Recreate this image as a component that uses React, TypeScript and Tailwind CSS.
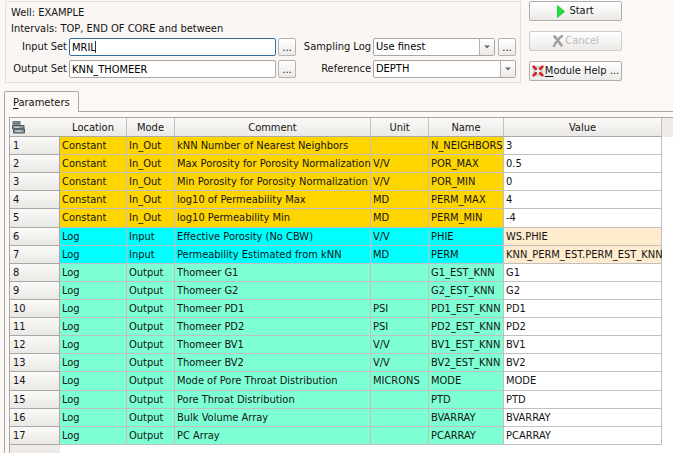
import React from "react";

type Row = [string, string, string, string, string, string];

const rows: Row[] = [
  ["Constant", "In_Out", "kNN Number of Nearest Neighbors", "", "N_NEIGHBORS", "3"],
  ["Constant", "In_Out", "Max Porosity for Porosity Normalization", "V/V", "POR_MAX", "0.5"],
  ["Constant", "In_Out", "Min Porosity for Porosity Normalization", "V/V", "POR_MIN", "0"],
  ["Constant", "In_Out", "log10 of Permeability Max", "MD", "PERM_MAX", "4"],
  ["Constant", "In_Out", "log10 Permeability Min", "MD", "PERM_MIN", "-4"],
  ["Log", "Input", "Effective Porosity (No CBW)", "V/V", "PHIE", "WS.PHIE"],
  ["Log", "Input", "Permeability Estimated from kNN", "MD", "PERM", "KNN_PERM_EST.PERM_EST_KNN"],
  ["Log", "Output", "Thomeer G1", "", "G1_EST_KNN", "G1"],
  ["Log", "Output", "Thomeer G2", "", "G2_EST_KNN", "G2"],
  ["Log", "Output", "Thomeer PD1", "PSI", "PD1_EST_KNN", "PD1"],
  ["Log", "Output", "Thomeer PD2", "PSI", "PD2_EST_KNN", "PD2"],
  ["Log", "Output", "Thomeer BV1", "V/V", "BV1_EST_KNN", "BV1"],
  ["Log", "Output", "Thomeer BV2", "V/V", "BV2_EST_KNN", "BV2"],
  ["Log", "Output", "Mode of Pore Throat Distribution", "MICRONS", "MODE", "MODE"],
  ["Log", "Output", "Pore Throat Distribution", "", "PTD", "PTD"],
  ["Log", "Output", "Bulk Volume Array", "", "BVARRAY", "BVARRAY"],
  ["Log", "Output", "PC Array", "", "PCARRAY", "PCARRAY"],
];

const modeColor: Record<string, string> = {
  In_Out: "bg-[#ffd500]",
  Input: "bg-[#00ffff]",
  Output: "bg-[#7fffd4]",
};

const headings = ["Location", "Mode", "Comment", "Unit", "Name", "Value"];

const fieldStyle =
  "h-[18px] w-full rounded-xs border bg-white px-0.5 text-black outline-none";

function MoreButton({ label }: { label: string }) {
  return (
    <button
      aria-label={label}
      className="flex h-[18px] w-[18px] shrink-0 items-center justify-center rounded-xs border border-[#b5b2af] bg-linear-to-b from-white to-[#eceae8] leading-none"
    >
      ...
    </button>
  );
}

function Combo({ id, value }: { id: string; value: string }) {
  return (
    <div className="relative min-w-0 flex-1">
      <select id={id} defaultValue={value} className={`${fieldStyle} block appearance-none border-[#aaa7a4]`}>
        <option>{value}</option>
      </select>
      <span className="pointer-events-none absolute inset-y-px right-px flex w-[15px] items-center justify-center border-l border-[#b5b2af] bg-linear-to-b from-white to-[#eceae8]">
        <svg width="6" height="4" viewBox="0 0 6 4" aria-hidden="true">
          <path d="M0 0.5h6L3 3.5z" fill="#6b6967" />
        </svg>
      </span>
    </div>
  );
}

const actionStyle =
  "flex h-5 items-center justify-center rounded-xs border bg-linear-to-b from-white to-[#eceae8] whitespace-nowrap";

export default function App() {
  return (
    <div className="flex min-h-screen flex-col overflow-hidden bg-[#fcf8f5] font-['DejaVu_Sans_Condensed','DejaVu_Sans',sans-serif] text-[11px] leading-4 text-[#141414]">
      <div className="flex items-start gap-2 pt-px pr-[51px] pl-[5px]">
        <section className="min-w-0 flex-1 border border-[#e2dfdc] bg-[#faf6f3] pt-[3px] pr-1 pb-1 pl-[5px]">
          <p>Well: EXAMPLE</p>
          <p>Intervals: TOP, END OF CORE and between</p>
          <div className="mt-px grid grid-cols-[56px_minmax(0,227fr)_73px_minmax(0,143fr)] items-center gap-x-0.5 gap-y-1">
            <label htmlFor="input-set" className="text-right">Input Set</label>
            <div className="flex gap-0.5">
              <div className="relative flex-1">
                <input id="input-set" defaultValue="MRIL" className={`${fieldStyle} block border-[#31719e]`} />
                <span className="absolute top-[3px] left-[26px] h-3 w-px bg-[#333]" />
              </div>
              <MoreButton label="Browse input sets" />
            </div>
            <label htmlFor="sampling" className="text-right">Sampling Log</label>
            <div className="flex gap-[3px]">
              <Combo id="sampling" value="Use finest" />
              <MoreButton label="Browse sampling logs" />
            </div>
            <label htmlFor="output-set" className="text-right">Output Set</label>
            <div className="flex gap-0.5">
              <div className="flex-1">
                <input id="output-set" defaultValue="KNN_THOMEER" className={`${fieldStyle} block border-[#aaa7a4]`} />
              </div>
              <MoreButton label="Browse output sets" />
            </div>
            <label htmlFor="reference" className="text-right">Reference</label>
            <div className="flex">
              <Combo id="reference" value="DEPTH" />
            </div>
          </div>
        </section>

        <div className="flex w-[93px] shrink-0 flex-col gap-[10px]">
          <button className={`${actionStyle} gap-1 border-[#b0adaa]`}>
            <svg width="8" height="13" viewBox="0 0 8 13" aria-hidden="true">
              <path d="M0.5 0.5L7.5 6.5L0.5 12.5z" fill="#1fe03a" stroke="#14b82b" strokeWidth="0.7" />
            </svg>
            Start
          </button>
          <button disabled className={`${actionStyle} gap-px border-[#cfccc9] text-[#bebbb8]`}>
            <svg width="12" height="12" viewBox="0 0 12 12" aria-hidden="true">
              <path d="M2.500 1.500C5 4 7 7 9.500 10.500M10 1C6.500 3.500 4 7 2 11" fill="none" stroke="#a3a19f" strokeWidth="2.600" strokeLinecap="round" />
            </svg>
            Cancel
          </button>
          <button className={`${actionStyle} gap-px border-[#b0adaa]`}>
            <svg width="12" height="12" viewBox="0 0 13 13" aria-hidden="true">
              <circle cx="6.500" cy="6.500" r="4.300" fill="none" stroke="#d3d3d5" strokeWidth="3" />
              <path d="M1.800 1.800L4 4M11.200 1.800L9 4M1.800 11.200L4 9M11.200 11.200L9 9" stroke="#c9282d" strokeWidth="3" strokeLinecap="round" />
              <path d="M0.500 4.500L1.500 3.500M8.500 0.500L9.500 1.500M0.500 8.500L1.500 9.500M12.500 8.500L11.500 9.500" stroke="#ee9a9c" strokeWidth="1" />
            </svg>
            <span><u className="underline-offset-2">M</u>odule Help ...</span>
          </button>
        </div>
      </div>

      <div role="tablist" className="mt-2 flex pl-1">
        <button
          role="tab"
          aria-selected="true"
          className="z-10 -mb-px h-[21px] rounded-t-xs border border-b-0 border-[#aaa7a4] bg-[#fcf8f5] px-2 pt-0.5"
        >
          <u className="underline-offset-2">P</u>arameters
        </button>
      </div>

      <div role="tabpanel" className="ml-1 flex flex-1 flex-col border-t border-l border-[#aaa7a4] pt-[5px] pl-1">
        <div className="flex flex-1 flex-col border-t border-l border-[#aaa7a4] bg-white">
          <div className="flex items-stretch bg-[#edeae7]">
            <table className="h-[327px] w-[652px] table-fixed border-separate border-spacing-0 bg-white">
              <colgroup>
                <col className="w-[50px]" />
                <col className="w-[67px]" />
                <col className="w-[48px]" />
                <col className="w-[196px]" />
                <col className="w-[58px]" />
                <col className="w-[75px]" />
                <col />
              </colgroup>
              <thead>
                <tr className="h-[19px] bg-linear-to-b from-[#fcfaf8] to-[#eae8e5]">
                  <th className="border-b border-[#aaa7a4] p-0 pl-0.5">
                    <svg width="13" height="13" viewBox="0 0 13 13" role="img" aria-label="Table options">
                      <path d="M0.500 0.500h8v3h-8z" fill="#8b979e" />
                      <path d="M0.500 0.800h8M0.500 3h8" stroke="#4c575e" />
                      <path d="M0.500 4.500h11.500v3.500h-11.500zM1.500 8h11v4h-11z" fill="#8b979e" stroke="#4c575e" />
                      <path d="M2.500 6.200h5M3.500 10h6" stroke="#dce2e5" />
                    </svg>
                  </th>
                  {headings.map((h) => (
                    <th key={h} className="border-r border-b border-[#c3c0bd] border-b-[#aaa7a4] p-0 pt-0.5 text-center font-normal">
                      {h}
                    </th>
                  ))}
                </tr>
              </thead>
              <tbody>
                {rows.map((row, i) => (
                  <tr key={row[4]} className={modeColor[row[1]]}>
                    <th scope="row" className="border-r border-b border-[#aaa7a4] bg-linear-to-b from-[#fcfaf8] to-[#eae8e5] p-0 pt-px pl-[3px] text-left font-normal">
                      {i + 1}
                    </th>
                    {row.slice(0, 5).map((cell, c) => (
                      <td key={c} className="border-r border-b border-[#c0c0c0] p-0 pt-px pl-0.5 whitespace-nowrap">
                        {cell}
                      </td>
                    ))}
                    <td
                      className={`border-r border-b border-[#c0c0c0] p-0 pt-px pl-0.5 whitespace-nowrap ${
                        row[1] === "Input" ? "bg-[#ffebcd]" : "bg-white"
                      }`}
                    >
                      {row[5]}
                    </td>
                  </tr>
                ))}
              </tbody>
            </table>
            <div className="mt-[19px] flex-1 bg-white" />
          </div>
          <div className="w-[50px] flex-1 bg-[#edeae7]" />
        </div>
      </div>
    </div>
  );
}
